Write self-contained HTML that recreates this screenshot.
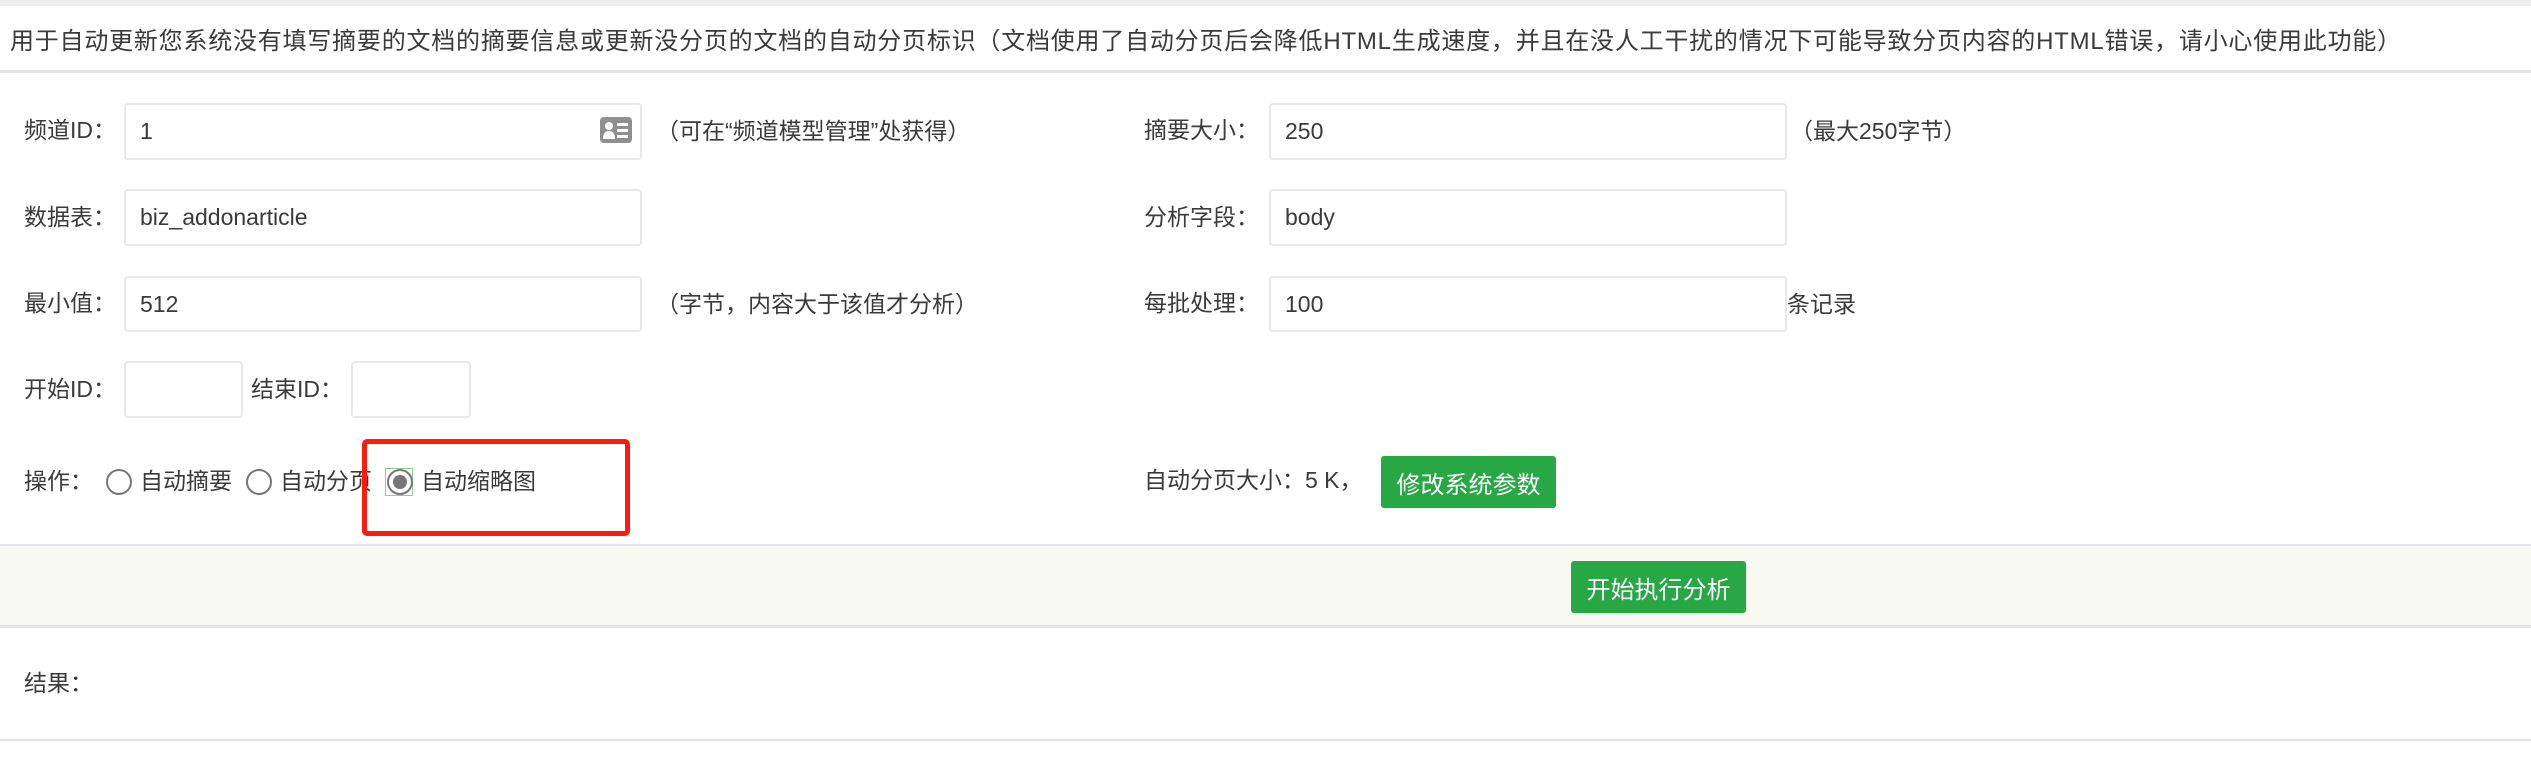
<!DOCTYPE html>
<html><head><meta charset="utf-8"><style>
*{margin:0;padding:0;box-sizing:border-box}
body{width:2531px;height:781px;background:#fff;position:relative;overflow:hidden;font-family:"Liberation Sans","Noto Sans CJK SC",sans-serif;font-size:23px;color:#3a3a3a}
.a{position:absolute;white-space:nowrap;line-height:1}
.in{position:absolute;border:2px solid #e8e8e8;border-radius:4px;background:#fff;padding-left:14px;display:flex;align-items:center;font-size:23px}
.btn{position:absolute;background:#28a745;color:#fff;border-radius:3px;display:flex;align-items:center;justify-content:center;font-size:24px}
.r{position:absolute;width:26px;height:26px;border:2.5px solid #777;border-radius:50%}
</style></head><body>
<div style="position:absolute;left:0;top:0;width:2531px;height:6px;background:#eeeef0"></div>
<div class="a" style="left:10px;top:30px;font-size:24px;letter-spacing:0.78px">用于自动更新您系统没有填写摘要的文档的摘要信息或更新没分页的文档的自动分页标识（文档使用了自动分页后会降低HTML生成速度，并且在没人工干扰的情况下可能导致分页内容的HTML错误，请小心使用此功能）</div>
<div style="position:absolute;left:0;top:70px;width:2531px;height:3px;background:#e4e4e8"></div>

<div class="a" style="left:24px;top:119px">频道ID：</div>
<div class="in" style="left:124px;top:103px;width:518px;height:57px">1</div>
<svg style="position:absolute;left:600px;top:117px" width="32" height="26" viewBox="0 0 32 26"><rect width="32" height="26" rx="4" fill="#8f8f8f"/><circle cx="9" cy="9" r="4" fill="#fff"/><path d="M3 22 Q3 14 9 14 Q15 14 15 22Z" fill="#fff"/><rect x="17" y="6" width="11" height="3" fill="#fff"/><rect x="17" y="12" width="11" height="3" fill="#fff"/><rect x="17" y="18" width="11" height="3" fill="#fff"/></svg>
<div class="a" style="left:656px;top:120px">（可在“频道模型管理”处获得）</div>

<div class="a" style="left:24px;top:206px">数据表：</div>
<div class="in" style="left:124px;top:189px;width:518px;height:57px">biz_addonarticle</div>

<div class="a" style="left:24px;top:292px">最小值：</div>
<div class="in" style="left:124px;top:276px;width:518px;height:56px">512</div>
<div class="a" style="left:656px;top:293px">（字节，内容大于该值才分析）</div>

<div class="a" style="left:24px;top:378px">开始ID：</div>
<div class="in" style="left:124px;top:361px;width:119px;height:57px"></div>
<div class="a" style="left:251px;top:378px">结束ID：</div>
<div class="in" style="left:351px;top:361px;width:120px;height:57px"></div>

<div class="a" style="left:24px;top:470px">操作：</div>
<div class="r" style="left:106px;top:469px"></div>
<div class="a" style="left:140px;top:470px">自动摘要</div>
<div class="r" style="left:246px;top:469px"></div>
<div class="a" style="left:280px;top:470px">自动分页</div>
<div style="position:absolute;left:385px;top:468px;width:28px;height:28px;border:1.5px solid #8fd08f"></div>
<div class="r" style="left:387px;top:469px;display:flex;align-items:center;justify-content:center"><div style="width:14px;height:14px;border-radius:50%;background:#777"></div></div>
<div class="a" style="left:421px;top:470px">自动缩略图</div>
<div style="position:absolute;left:362px;top:439px;width:268px;height:97px;border:5px solid #ff1a10;border-radius:5px"></div>

<div class="a" style="left:1144px;top:119px">摘要大小：</div>
<div class="in" style="left:1269px;top:103px;width:518px;height:57px">250</div>
<div class="a" style="left:1790px;top:120px">（最大250字节）</div>

<div class="a" style="left:1144px;top:206px">分析字段：</div>
<div class="in" style="left:1269px;top:189px;width:518px;height:57px">body</div>

<div class="a" style="left:1144px;top:292px">每批处理：</div>
<div class="in" style="left:1269px;top:276px;width:518px;height:56px">100</div>
<div class="a" style="left:1787px;top:293px">条记录</div>

<div class="a" style="left:1144px;top:469px">自动分页大小：5 K，</div>
<div class="btn" style="left:1381px;top:456px;width:175px;height:52px">修改系统参数</div>

<div style="position:absolute;left:0;top:544px;width:2531px;height:84px;background:#f8faf1;border-top:2px solid #e4e4e8;border-bottom:3px solid #e4e4e8"></div>
<div class="btn" style="left:1571px;top:561px;width:175px;height:52px">开始执行分析</div>

<div class="a" style="left:24px;top:672px">结果：</div>
<div style="position:absolute;left:0;top:739px;width:2531px;height:2px;background:#e4e4e8"></div>
</body></html>
